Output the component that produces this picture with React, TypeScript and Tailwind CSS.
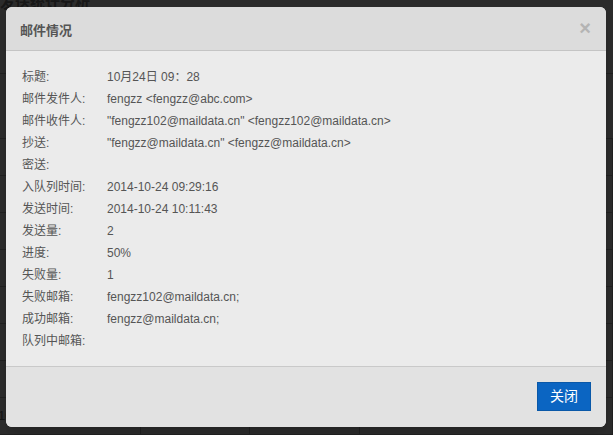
const rows: [string, string][] = [
  ["标题:", "10月24日 09：28"],
  ["邮件发件人:", "fengzz <fengzz@abc.com>"],
  ["邮件收件人:", "\"fengzz102@maildata.cn\" <fengzz102@maildata.cn>"],
  ["抄送:", "\"fengzz@maildata.cn\" <fengzz@maildata.cn>"],
  ["密送:", ""],
  ["入队列时间:", "2014-10-24 09:29:16"],
  ["发送时间:", "2014-10-24 10:11:43"],
  ["发送量:", "2"],
  ["进度:", "50%"],
  ["失败量:", "1"],
  ["失败邮箱:", "fengzz102@maildata.cn;"],
  ["成功邮箱:", "fengzz@maildata.cn;"],
  ["队列中邮箱:", ""],
];

const tableRows = [
  ["10月24日 09：28", "192.168.10.211", "937B", "fengzz102@maildata.cn,fengz..."],
  ["10月24日 09：28", "192.168.10.211", "937B", "fengzz102@maildata.cn,fengz..."],
  ["10月24日 3333333", "192.168.10.211", "1225B", "fengzz@maildata.cn"],
  ["10月24日 3333333", "192.168.10.211", "1294B", "fengzz@maildata.cn"],
  ["10月24日 3333333", "192.168.10.211", "1225B", "fengzz@maildata.cn"],
  ["10月24日 3333333", "192.168.10.211", "1294B", "fengzz@maildata.cn"],
  ["10月23日 对错", "192.168.10.211", "917B", "fengzz105@maildata.cn,feng..."],
  ["10月23日 错误+正确地址", "192.168.10.211", "956B", "fengzz@maildata.cn"],
];

const font = "font-['Liberation_Sans','Noto_Sans_CJK_SC',sans-serif]";

function PageBehind() {
  return (
    <div className="flex flex-col h-full bg-white text-[#777]">
      <div className="h-[19px] overflow-hidden">
        <p className="-mt-[8px] text-[15px] font-bold text-[#888]">发送统计分析</p>
      </div>
      <div className="h-[56px] border-b border-[#bbb]" />
      <div className="h-[37px]" />
      <div className="grid grid-cols-[141px_109px_110px_1fr] text-[13px]">
        {["邮件标题", "邮件来源", "邮件大小", "收件人"].map((h) => (
          <div key={h} className="h-[28px] flex items-center justify-center font-bold border-b border-[#bbb]">
            {h}
          </div>
        ))}
        {tableRows.map((r, i) =>
          r.map((c, j) => (
            <div
              key={i + "-" + j}
              className="h-[37px] flex items-center justify-center whitespace-nowrap overflow-hidden border-b border-r border-[#bbb]"
            >
              {c}
            </div>
          ))
        )}
      </div>
    </div>
  );
}

export default function App() {
  return (
    <div className={`relative w-[613px] h-[435px] overflow-hidden ${font}`}>
      <PageBehind />
      <div className="absolute inset-0 bg-black/[0.83]" />

      <div className="absolute left-[6px] top-[7px] w-[600px] h-[420px] rounded-md overflow-hidden flex flex-col bg-[#ebebeb] shadow-lg">
        <div className="h-[44px] shrink-0 bg-[#dcdcdc] border-b border-[#c4c4c4] flex items-center justify-between pl-[14px] pr-[15px] pt-[4px]">
          <h3 className="text-[13px] font-bold text-[#555]">邮件情况</h3>
          <span className="text-[20px] leading-none font-bold text-[#b4b4b4] -mt-[6px]">×</span>
        </div>

        <div className="flex-1 pt-[15px] pl-[16px] text-[12px] text-[#555]">
          {rows.map(([label, value]) => (
            <div key={label} className="flex h-[22px] items-center">
              <span className="w-[85px] shrink-0">{label}</span>
              <span>{value}</span>
            </div>
          ))}
        </div>

        <div className="h-[61px] shrink-0 bg-[#e2e2e2] border-t border-[#c9c9c9] flex justify-end items-start pt-[15px] pr-[15px]">
          <button className="w-[54px] h-[29px] bg-[#0b65c2] border border-[#0a58a8] text-white text-[14px] flex items-center justify-center">
            关闭
          </button>
        </div>
      </div>
    </div>
  );
}
